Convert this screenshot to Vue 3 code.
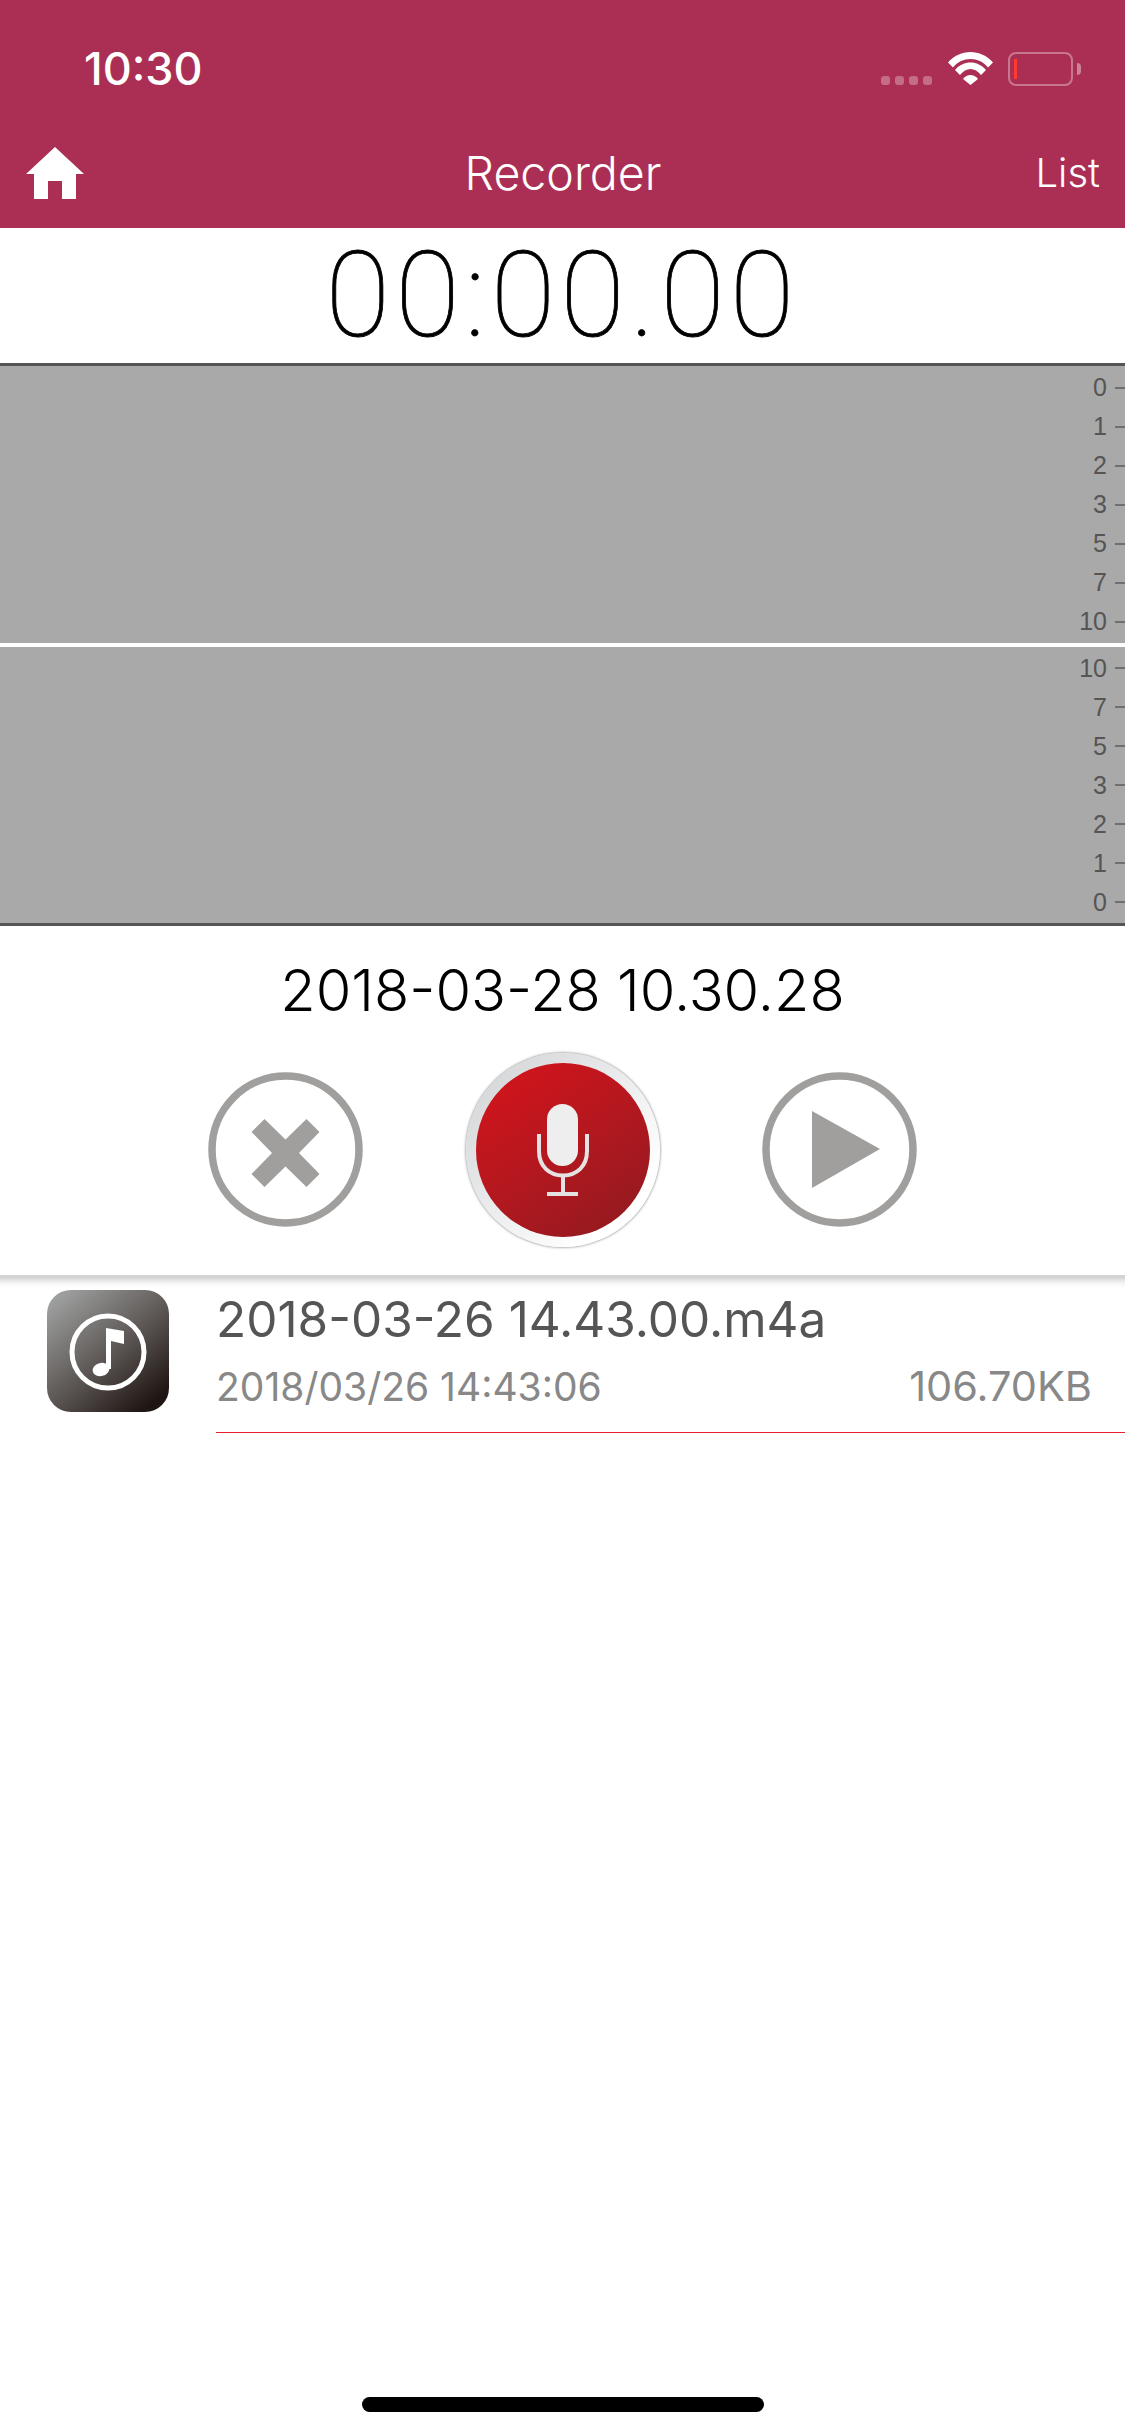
<template>
  <div class="page">
    <header class="top">
      <div class="status">
        <span class="clock">10:30</span>
        <div class="status-right">
          <div class="dots"><i v-for="n in 4" :key="n"></i></div>
          <svg class="wifi" width="45" height="33" viewBox="0 0 45 33">
            <path d="M0 10.5C12-3.5 33-3.5 45 10.5L40 15.5C31 4.2 14 4.2 5 15.5Z" fill="#fff" />
            <path d="M7 18C15 8 30 8 38 18L33 23C27 15 18 15 12 23Z" fill="#fff" />
            <path d="M15 27C19 21.7 26 21.7 30 27L22.5 33Z" fill="#fff" />
          </svg>
          <div class="battery"><b></b></div>
          <div class="nub"></div>
        </div>
      </div>
      <nav class="nav">
        <svg class="home" width="58" height="52" viewBox="0 0 58 52">
          <path d="M29 0L58 27H50V52H36V34H22V52H8V27H0Z" fill="#fff" />
        </svg>
        <span class="nav-title">Recorder</span>
        <span class="nav-link">List</span>
      </nav>
    </header>

    <div class="timer">00:00.00</div>

    <section class="meters">
      <div class="meter meter-top">
        <div v-for="label in scale" :key="label" class="tick">
          <span>{{ label }}</span><i></i>
        </div>
      </div>
      <div class="meter meter-bottom">
        <div v-for="label in reversedScale" :key="label" class="tick">
          <span>{{ label }}</span><i></i>
        </div>
      </div>
    </section>

    <div class="rec-name">2018-03-28 10.30.28</div>

    <div class="controls">
      <svg width="155" height="155" viewBox="0 0 155 155">
        <circle cx="77.5" cy="77.5" r="73.5" fill="none" stroke="#a09f9e" stroke-width="7.5" />
        <polygon points="77.5,67.5 98.5,47 111.5,60 91,81 111.5,102 98.5,115 77.5,94.5 56.5,115 43.5,102 64,81 43.5,60 56.5,47" fill="#a09f9e" />
      </svg>
      <div class="rec-btn">
        <div class="rec-inner">
          <svg width="52" height="92" viewBox="0 0 52 92">
            <rect x="10" y="0" width="31" height="62" rx="15.5" fill="#eeeeee" />
            <path d="M2 30V47C2 62 12 71.5 26 71.5C40 71.5 50 62 50 47V30" fill="none" stroke="#e4e2e2" stroke-width="4" />
            <path d="M26 71V89" fill="none" stroke="#e4e2e2" stroke-width="4" />
            <rect x="10" y="88" width="31" height="4" fill="#e4e2e2" />
          </svg>
        </div>
      </div>
      <svg width="155" height="155" viewBox="0 0 155 155">
        <circle cx="77.5" cy="77.5" r="73.5" fill="none" stroke="#a09f9e" stroke-width="7.5" />
        <polygon points="50,39 118,77 50,116" fill="#a09f9e" />
      </svg>
    </div>

    <section class="list">
      <div v-for="item in files" :key="item.name" class="row">
        <div class="thumb">
          <svg width="122" height="122" viewBox="0 0 122 122">
            <circle cx="61" cy="62" r="36" fill="none" stroke="#fff" stroke-width="5" />
            <path d="M59 38L77 41V54L64 51V79H59Z" fill="#fff" />
            <ellipse cx="54" cy="79.5" rx="8.5" ry="6.5" transform="rotate(-15 54 79.5)" fill="#fff" />
          </svg>
        </div>
        <div class="row-body">
          <div class="row-title">{{ item.name }}</div>
          <div class="row-meta">
            <span>{{ item.date }}</span>
            <span class="row-size">{{ item.size }}</span>
          </div>
        </div>
      </div>
    </section>

    <div class="home-bar"></div>
  </div>
</template>

<script setup>
import { computed, ref } from 'vue'

const scale = ref([0, 1, 2, 3, 5, 7, 10])
const reversedScale = computed(() => [...scale.value].reverse())

const files = ref([
  { name: '2018-03-26 14.43.00.m4a', date: '2018/03/26 14:43:06', size: '106.70KB' }
])
</script>

<style scoped>
.page {
  width: 1125px;
  height: 2436px;
  display: flex;
  flex-direction: column;
  background: #fff;
  font-family: Inter, "Liberation Sans", sans-serif;
  overflow: hidden;
}

.top {
  height: 228px;
  background: #ab2f54;
  color: #fff;
  display: flex;
  flex-direction: column;
}

.status {
  height: 130px;
  padding: 46px 44px 0 84px;
  box-sizing: border-box;
  display: flex;
  justify-content: space-between;
  align-items: flex-start;
}

.clock {
  font-size: 45px;
  line-height: 46px;
  font-weight: 500;
}

.status-right {
  display: flex;
  align-items: flex-start;
  padding-top: 6px;
}

.dots {
  display: flex;
  gap: 5px;
  margin: 24px 16px 0 0;
}

.dots i {
  width: 9px;
  height: 9px;
  border-radius: 3px;
  background: rgba(255, 255, 255, 0.3);
}

.battery {
  width: 65px;
  height: 34px;
  margin-left: 15px;
  box-sizing: border-box;
  border: 2.5px solid rgba(255, 255, 255, 0.35);
  border-radius: 8px;
  padding: 4.5px 3.5px;
}

.battery b {
  display: block;
  width: 3px;
  height: 20px;
  background: #ff3b30;
}

.nub {
  width: 4px;
  height: 12px;
  margin: 11px 0 0 4px;
  border-radius: 0 4px 4px 0;
  background: rgba(255, 255, 255, 0.4);
}

.nav {
  flex: 1;
  display: grid;
  grid-template-columns: 1fr auto 1fr;
  align-items: start;
  padding: 16px 25px 0 26px;
}

.nav .home {
  margin-top: 1px;
}

.nav-title {
  font-size: 46.5px;
  line-height: 54px;
  font-weight: 300;
}

.nav-link {
  justify-self: end;
  font-size: 40px;
  line-height: 54px;
  font-weight: 300;
}

.timer {
  height: 135px;
  display: flex;
  align-items: center;
  justify-content: center;
  font-family: Roboto, Inter, sans-serif;
  font-size: 118px;
  font-weight: 100;
  letter-spacing: 5px;
  -webkit-text-stroke: 0.8px #000;
  color: #000;
}

.meters {
  display: flex;
  flex-direction: column;
  gap: 4px;
}

.meter {
  height: 280px;
  box-sizing: border-box;
  background: #a9a9a9;
  display: flex;
  flex-direction: column;
}

.meter-top {
  border-top: 3px solid #555;
  padding-top: 2px;
}

.meter-bottom {
  height: 279px;
  border-bottom: 3px solid #555;
  padding-top: 1.5px;
}

.tick {
  height: 39px;
  flex: none;
  display: flex;
  align-items: center;
  justify-content: flex-end;
  font-size: 25px;
  color: #555;
  font-family: "Liberation Sans", sans-serif;
}

.tick i {
  width: 10px;
  height: 2px;
  margin-left: 8px;
  background: #6f6f6f;
}

.rec-name {
  margin-top: 28px;
  height: 72px;
  line-height: 72px;
  text-align: center;
  font-size: 57.7px;
  font-weight: 300;
  color: #000;
}

.controls {
  height: 249px;
  padding-top: 27px;
  box-sizing: border-box;
  display: grid;
  grid-template-columns: repeat(3, 277px);
  justify-content: center;
  justify-items: center;
  align-items: start;
}

.controls > svg {
  margin-top: 19px;
}

.rec-btn {
  width: 194px;
  height: 194px;
  box-sizing: border-box;
  padding: 10px;
  border-radius: 50%;
  background: linear-gradient(135deg, #cfd1d3, #fff 80%);
  box-shadow: 0 0 3px #666;
}

.rec-inner {
  height: 100%;
  border-radius: 50%;
  background: linear-gradient(145deg, #cf141c 12%, #b0181f 55%, #921a20 92%);
  display: flex;
  align-items: center;
  justify-content: center;
}

.list {
  box-shadow: inset 0 10px 8px -8px #bbb;
  border-top: 2px solid #d4d4d4;
}

.row {
  display: flex;
  align-items: flex-start;
  padding: 13px 0 0 47px;
  gap: 47px;
}

.thumb {
  width: 122px;
  height: 122px;
  flex: none;
  border-radius: 24px;
  background: linear-gradient(140deg, #9c9e9d 8%, #5f5a58 50%, #1f1512 90%);
}

.row-body {
  flex: 1;
  padding-right: 33px;
  height: 143px;
  box-sizing: border-box;
  border-bottom: 1.5px solid #e4202a;
}

.row-title {
  font-size: 49.5px;
  line-height: 60px;
  color: #555;
  margin-top: -1px;
}

.row-meta {
  display: flex;
  justify-content: space-between;
  align-items: baseline;
  margin-top: 12px;
  font-size: 39px;
  line-height: 50px;
  color: #888;
}

.row-size {
  font-size: 41.5px;
}

.home-bar {
  width: 402px;
  height: 15px;
  margin: auto auto 24px;
  border-radius: 8px;
  background: #000;
}
</style>
